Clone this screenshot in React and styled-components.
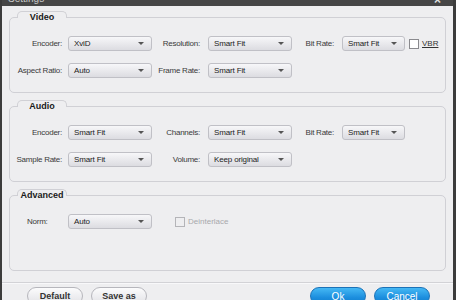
import React from 'react';
import styled, { createGlobalStyle } from 'styled-components';

const Global = createGlobalStyle`
	body {
		margin: 0;
		background: #eeeef0;
		font-family: "Liberation Sans", Arial, sans-serif;
	}
`;

const Window = styled.div`
	width: 456px;
	height: 300px;
	box-sizing: border-box;
	overflow: hidden;
	display: flex;
	flex-direction: column;
	background: #eeeef0;
	border-left: 2px solid #3c3c3c;
	border-right: 3px solid #3c3c3c;
`;

const TitleBar = styled.div`
	height: 6px;
	flex: none;
	overflow: hidden;
	display: flex;
	justify-content: space-between;
	padding: 0 12px 0 6px;
	background: #464646;
	color: #c8c8c8;
	font-size: 10px;
	line-height: 12px;
`;

const TitleText = styled.span`
	margin-top: -7px;
`;

const Close = styled.span`
	margin-top: -6px;
	font-size: 12px;
	font-weight: bold;
	color: #e0e0e0;
`;

const Body = styled.div`
	display: flex;
	flex-direction: column;
	padding: 5px 7px 0 7px;
`;

const Group = styled.div`
	display: flex;
	flex-direction: column;
	& + & {
		margin-top: 7px;
	}
`;

const Tab = styled.div`
	align-self: flex-start;
	position: relative;
	z-index: 1;
	margin-left: 8px;
	width: 50px;
	height: 7px;
	box-sizing: border-box;
	border: 1px solid #d0d0d5;
	border-bottom: none;
	border-radius: 5px 5px 0 0;
	background: #eeeef0;
	text-align: center;
	font-size: 9px;
	font-weight: bold;
	line-height: 11px;
	color: #1a1a1a;
	white-space: nowrap;
`;

const Panel = styled.div`
	margin-top: -1px;
	height: 76px;
	box-sizing: border-box;
	border: 1px solid #d0d0d5;
	border-radius: 5px;
	padding-top: 18px;
	display: flex;
	flex-direction: column;
	gap: 12px;
`;

const Row = styled.div`
	display: flex;
	align-items: center;
	height: 15px;
`;

const Label = styled.span`
	width: ${(p) => p.$w}px;
	box-sizing: border-box;
	flex: none;
	margin-right: ${(p) => p.$gap || 0}px;
	padding-left: ${(p) => p.$pad || 0}px;
	text-align: ${(p) => p.$align || 'right'};
	font-size: 8px;
	letter-spacing: -0.25px;
	color: #3a3a3a;
	white-space: nowrap;
`;

const Select = styled.div`
	width: ${(p) => p.$w}px;
	height: 15px;
	box-sizing: border-box;
	flex: none;
	display: flex;
	align-items: center;
	justify-content: space-between;
	padding: 0 7px 0 5px;
	border: 1px solid #c0c0c6;
	border-radius: 3px;
	background: linear-gradient(#f7f7f9, #dcdce1);
	font-size: 8px;
	letter-spacing: -0.15px;
	color: #222;
	white-space: nowrap;
`;

const Arrow = styled.span`
	width: 0;
	height: 0;
	border-left: 3px solid transparent;
	border-right: 3px solid transparent;
	border-top: 3px solid #555;
`;

const Check = styled.span`
	width: 10px;
	height: 10px;
	box-sizing: border-box;
	flex: none;
	margin-left: ${(p) => p.$ml}px;
	border: 1px solid ${(p) => (p.$disabled ? '#b4b4b8' : '#8a8a8e')};
	background: ${(p) => (p.$disabled ? '#eeeef0' : '#fff')};
`;

const CheckText = styled.span`
	margin-left: 3px;
	font-size: 8px;
	color: ${(p) => (p.$disabled ? '#a8a8ac' : '#333')};
	text-decoration: ${(p) => (p.$underline ? 'underline' : 'none')};
`;

const Footer = styled.div`
	margin-top: 11px;
	border-top: 1px solid #d2d2d6;
	box-shadow: inset 0 1px 0 #f8f8fa;
	display: flex;
	gap: 8px;
	padding: 4px 23px 0 25px;
`;

const Spacer = styled.div`
	flex: 1;
`;

const Button = styled.div`
	width: 56px;
	height: 18px;
	box-sizing: border-box;
	display: flex;
	align-items: center;
	justify-content: center;
	border-radius: 9px;
	font-size: ${(p) => (p.$primary ? '10px' : '9px')};
	font-weight: ${(p) => (p.$primary ? 'normal' : 'bold')};
	color: ${(p) => (p.$primary ? '#fff' : '#333')};
	border: 1px solid ${(p) => (p.$primary ? '#1b72b8' : '#b6b6bc')};
	background: ${(p) =>
		p.$primary
			? 'linear-gradient(#45b8f4, #1c8ede 60%, #0f7ccc)'
			: 'linear-gradient(#fbfbfc, #e2e2e6)'};
`;

function Field({ label, lw, gap, value, sw }) {
	return (
		<>
			<Label $w={lw} $gap={gap}>{label}</Label>
			<Select $w={sw}>
				{value}
				<Arrow />
			</Select>
		</>
	);
}

export default function App() {
	return (
		<>
			<Global />
			<Window>
				<TitleBar>
					<TitleText>Settings</TitleText>
					<Close>×</Close>
				</TitleBar>
				<Body>
					<Group>
						<Tab>Video</Tab>
						<Panel>
							<Row>
								<Field label="Encoder:" lw={52} gap={6} value="XviD" sw={84} />
								<Field label="Resolution:" lw={48} gap={8} value="Smart Fit" sw={84} />
								<Field label="Bit Rate:" lw={42} gap={8} value="Smart Fit" sw={63} />
								<Check $ml={4} />
								<CheckText $underline>VBR</CheckText>
							</Row>
							<Row>
								<Field label="Aspect Ratio:" lw={52} gap={6} value="Auto" sw={84} />
								<Field label="Frame Rate:" lw={48} gap={8} value="Smart Fit" sw={84} />
							</Row>
						</Panel>
					</Group>
					<Group>
						<Tab>Audio</Tab>
						<Panel>
							<Row>
								<Field label="Encoder:" lw={52} gap={6} value="Smart Fit" sw={84} />
								<Field label="Channels:" lw={48} gap={8} value="Smart Fit" sw={84} />
								<Field label="Bit Rate:" lw={42} gap={8} value="Smart Fit" sw={63} />
							</Row>
							<Row>
								<Field label="Sample Rate:" lw={52} gap={6} value="Smart Fit" sw={84} />
								<Field label="Volume:" lw={48} gap={8} value="Keep original" sw={84} />
							</Row>
						</Panel>
					</Group>
					<Group>
						<Tab>Advanced</Tab>
						<Panel>
							<Row>
								<Label $w={52} $gap={6} $pad={17} $align="left">Norm:</Label>
								<Select $w={84}>
									Auto
									<Arrow />
								</Select>
								<Check $ml={23} $disabled />
								<CheckText $disabled>Deinterlace</CheckText>
							</Row>
						</Panel>
					</Group>
				</Body>
				<Footer>
					<Button>Default</Button>
					<Button>Save as</Button>
					<Spacer />
					<Button $primary>Ok</Button>
					<Button $primary>Cancel</Button>
				</Footer>
			</Window>
		</>
	);
}
